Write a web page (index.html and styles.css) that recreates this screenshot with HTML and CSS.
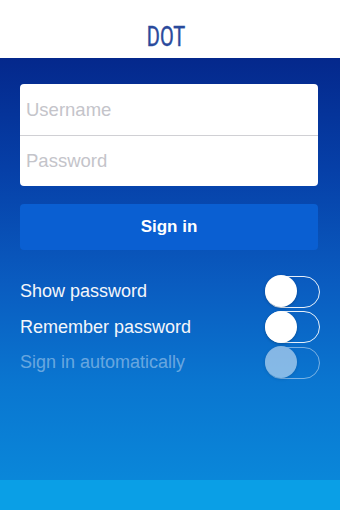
FILE: index.html
```html
<!DOCTYPE html>
<html>
<head>
<meta charset="utf-8">
<link rel="stylesheet" href="styles.css">
</head>
<body>
<div class="app">
  <header class="top">
    <div class="logo">DOT</div>
  </header>
  <main class="panel">
    <div class="card">
      <div class="field">Username</div>
      <div class="field">Password</div>
    </div>
    <div class="btn">Sign in</div>
    <div class="opts">
      <div class="opt"><span>Show password</span><span class="sw"><span class="knob"></span></span></div>
      <div class="opt"><span>Remember password</span><span class="sw"><span class="knob"></span></span></div>
      <div class="opt off"><span>Sign in automatically</span><span class="sw"><span class="knob"></span></span></div>
    </div>
    <div class="spacer"></div>
    <div class="band"></div>
  </main>
</div>
</body>
</html>
```
FILE: styles.css
```css
* { box-sizing: border-box; }
html, body { margin: 0; padding: 0; }
body { width: 340px; height: 510px; overflow: hidden; font-family: "Liberation Sans", Arial, sans-serif; }
.app { display: flex; flex-direction: column; height: 510px; }
.top { height: 58px; background: #fff; display: flex; justify-content: center; align-items: flex-start; }
.logo { margin-top: 21px; margin-right: 7px; font-family: Roboto, sans-serif; font-weight: 400; font-size: 27px; line-height: 32px; color: #2a4a9c; transform: scaleX(0.74); -webkit-text-stroke: 0.4px #2a4a9c; }
.panel { flex: 1; display: flex; flex-direction: column; padding: 26px 22px 0 20px;
  background: linear-gradient(180deg, #04288c 0%, #0640a8 25%, #0a5cc0 50%, #0a76d0 72%, #0a8cdc 100%); }
.card { background: #fff; border-radius: 4px; display: flex; flex-direction: column; }
.field { height: 51px; padding-left: 6px; display: flex; align-items: center; font-size: 18.5px; color: #c4c4ca; }
.field + .field { border-top: 1px solid #d0d0d4; }
.btn { margin-top: 18px; height: 46px; border-radius: 4px; background: #0a5fd2; color: #fff; font-weight: bold; font-size: 17px; display: flex; align-items: center; justify-content: center; }
.opts { margin-top: 26px; display: flex; flex-direction: column; gap: 4px; }
.opt { height: 31.5px; display: flex; align-items: center; justify-content: space-between; font-size: 18px; color: #f4f6fa; margin-right: -2px; }
.sw { width: 55px; height: 32px; border: 1.5px solid rgba(255,255,255,0.9); border-radius: 16px; position: relative; display: block; }
.knob { position: absolute; left: -1.5px; top: -1.5px; width: 32px; height: 32px; border-radius: 50%; background: #fff; box-shadow: 0 1px 3px rgba(0,0,0,0.25); }
.opt.off span:first-child { color: rgba(255,255,255,0.4); }
.opt.off .sw { opacity: 0.5; }
.spacer { flex: 1; }
.band { height: 30px; margin: 0 -22px 0 -20px; background: #0a9fe6; }
```
